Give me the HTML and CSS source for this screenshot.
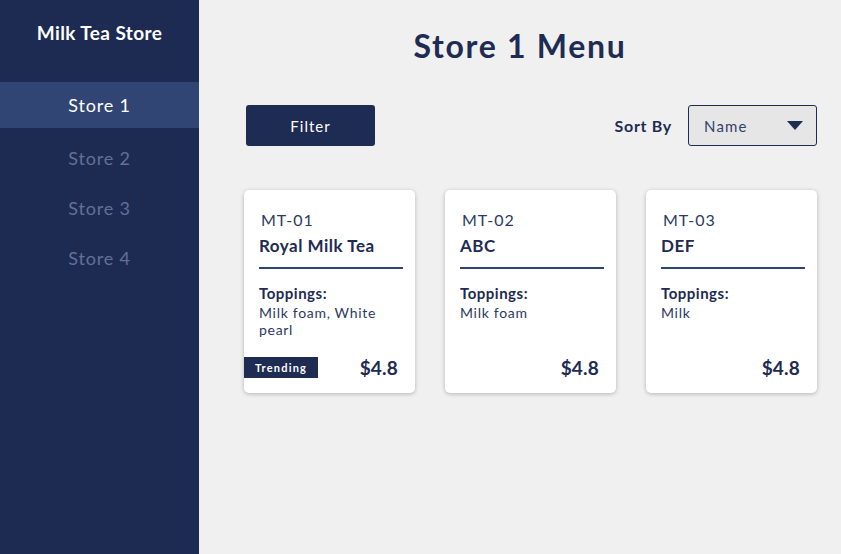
FILE: index.html
```html
<!DOCTYPE html>
<html>
<head>
<meta charset="utf-8">
<link rel="stylesheet" href="styles.css">
</head>
<body>
<div class="app">
  <aside class="sidebar">
    <div class="brand">Milk Tea Store</div>
    <nav class="nav">
      <div class="nav-item active">Store 1</div>
      <div class="nav-item">Store 2</div>
      <div class="nav-item">Store 3</div>
      <div class="nav-item">Store 4</div>
    </nav>
  </aside>
  <main class="main">
    <h1 class="title">Store 1 Menu</h1>
    <div class="toolbar">
      <button class="filter-btn">Filter</button>
      <div class="sort">
        <span class="sort-label">Sort By</span>
        <div class="select">
          <span>Name</span>
          <svg class="caret" width="16" height="10" viewBox="0 0 16 10"><path d="M0 0H16L8 9Z" fill="#1e2b52"/></svg>
        </div>
      </div>
    </div>
    <div class="cards">
      <div class="card">
        <div class="code">MT-01</div>
        <div class="name">Royal Milk Tea</div>
        <div class="rule"></div>
        <div class="top-label">Toppings:</div>
        <div class="top-list">Milk foam, White pearl</div>
        <div class="card-foot">
          <span class="badge">Trending</span>
          <span class="price">$4.8</span>
        </div>
      </div>
      <div class="card">
        <div class="code">MT-02</div>
        <div class="name">ABC</div>
        <div class="rule"></div>
        <div class="top-label">Toppings:</div>
        <div class="top-list">Milk foam</div>
        <div class="card-foot">
          <span></span>
          <span class="price">$4.8</span>
        </div>
      </div>
      <div class="card">
        <div class="code">MT-03</div>
        <div class="name">DEF</div>
        <div class="rule"></div>
        <div class="top-label">Toppings:</div>
        <div class="top-list">Milk</div>
        <div class="card-foot">
          <span></span>
          <span class="price">$4.8</span>
        </div>
      </div>
    </div>
  </main>
</div>
</body>
</html>
```
FILE: styles.css
```css
* { box-sizing: border-box; }
html, body { margin: 0; padding: 0; height: 100%; }
body {
  font-family: Lato, "Open Sans", sans-serif;
  color: #1e2b52;
  background: #f0f0f0;
}
.app { display: flex; height: 554px; }
.sidebar {
  width: 199px;
  flex: none;
  background: #1d2b52;
  color: #fff;
}
.brand {
  height: 82px;
  padding-top: 22px;
  text-align: center;
  font-size: 19px;
  font-weight: 700;
  line-height: 22px;
  letter-spacing: 0.4px;
}
.nav-item {
  height: 46px;
  line-height: 46px;
  margin-bottom: 4px;
  text-align: center;
  font-size: 18px;
  letter-spacing: 0.8px;
  color: #637096;
}
.nav-item.active {
  background: #304574;
  color: #fff;
  margin-bottom: 7px;
}
.main {
  flex: 1;
  padding: 0 24px 0 45px;
}
.title {
  margin: 0 0 0 -21px;
  padding-top: 27px;
  height: 105px;
  text-align: center;
  font-size: 32px;
  line-height: 38px;
  font-weight: 700;
  letter-spacing: 1.7px;
}
.toolbar {
  display: flex;
  justify-content: space-between;
  align-items: center;
  height: 41px;
}
.filter-btn {
  margin-left: 2px;
  width: 129px;
  height: 41px;
  border: none;
  border-radius: 3px;
  background: #1e2b52;
  color: #fff;
  font-family: inherit;
  font-size: 15px;
  letter-spacing: 1px;
}
.sort { display: flex; align-items: center; gap: 16px; }
.sort-label { font-size: 16px; font-weight: 700; letter-spacing: 0.7px; }
.select {
  width: 129px;
  height: 41px;
  border: 1px solid #1e2b52;
  border-radius: 3px;
  background: #e6e6e6;
  display: flex;
  align-items: center;
  justify-content: space-between;
  padding: 0 13px 0 15px;
  font-size: 15px;
  letter-spacing: 1.2px;
  color: #33416a;
}
.cards {
  display: flex;
  gap: 30px;
  margin-top: 44px;
}
.card {
  width: 171px;
  height: 203px;
  background: #fff;
  border-radius: 5px;
  box-shadow: 0 1px 4px rgba(0,0,0,0.25);
  padding: 20px 12px 15px 15px;
  display: flex;
  flex-direction: column;
}
.code {
  font-size: 16px;
  line-height: 20px;
  letter-spacing: 1px;
  padding-left: 2px;
  color: #2c3a63;
}
.name {
  font-size: 17px;
  font-weight: 700;
  line-height: 20px;
  letter-spacing: 0.5px;
  margin-top: 6px;
}
.rule {
  height: 2px;
  background: #2f4271;
  margin-top: 11px;
}
.top-label {
  margin-top: 15px;
  font-size: 15px;
  font-weight: 700;
  line-height: 18px;
  letter-spacing: 0.5px;
}
.top-list {
  margin-top: 2px;
  font-size: 14px;
  line-height: 17px;
  letter-spacing: 0.7px;
  color: #2c3a63;
}
.card-foot {
  margin-top: auto;
  display: flex;
  justify-content: space-between;
  align-items: center;
  height: 21px;
  margin-left: -15px;
  padding-right: 5px;
}
.badge {
  background: #1e2b52;
  color: #fff;
  font-size: 11px;
  font-weight: 700;
  letter-spacing: 1.2px;
  height: 21px;
  line-height: 21px;
  width: 74px;
  text-align: center;
}
.price {
  font-size: 19px;
  font-weight: 700;
  letter-spacing: 0.2px;
}
```
